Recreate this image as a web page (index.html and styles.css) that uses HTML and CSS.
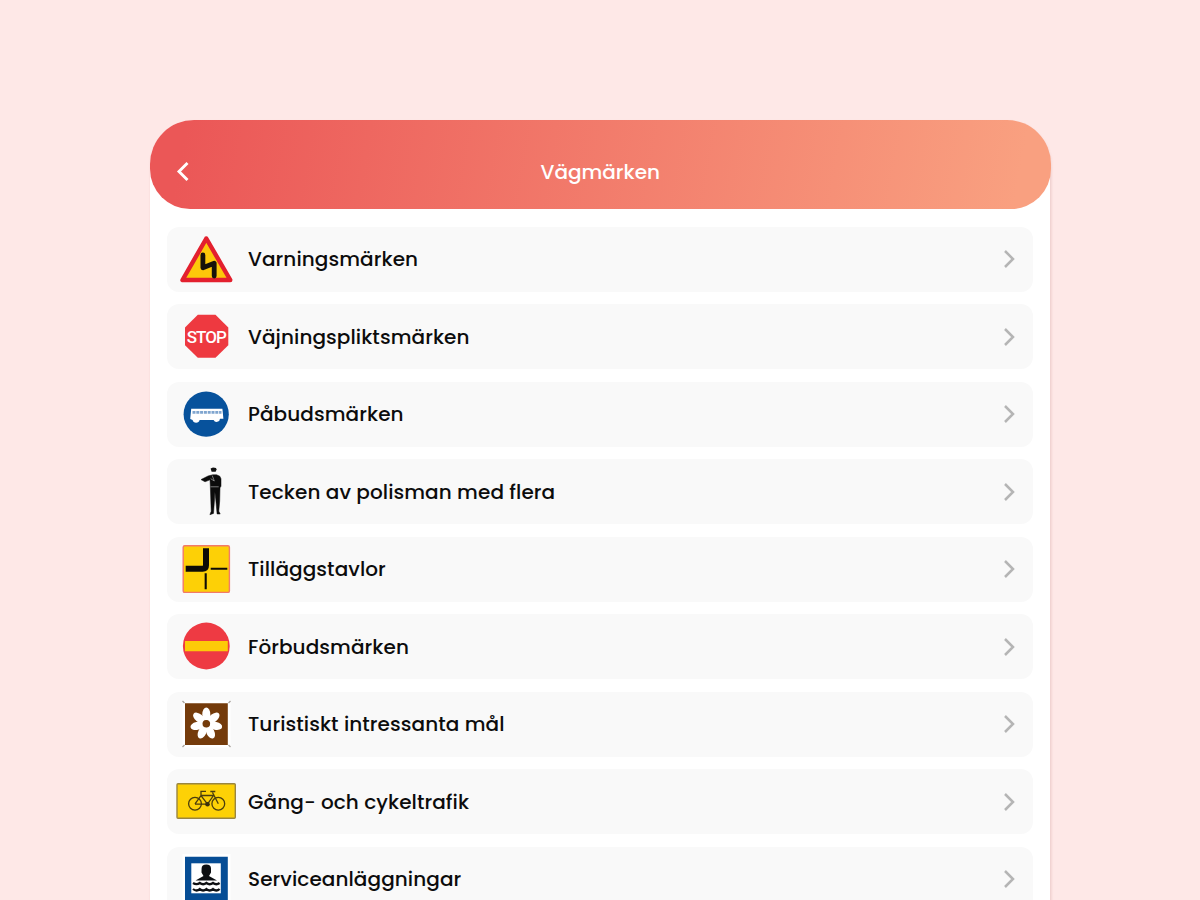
FILE: index.html
```html
<!DOCTYPE html>
<html lang="sv">
<head>
    <meta charset="UTF-8">
    <title>Vägmärken</title>
    <link rel="stylesheet" href="styles.css">
</head>
<body>
    <div class="panel">
        <header class="header">
            <svg class="back" viewBox="0 0 14 22"><path d="M11.5 2 3 10.5l8.5 8.5"/></svg>
            <h1>Vägmärken</h1>
        </header>

        <ul class="list">
            <li class="row">
                <svg class="sign" viewBox="0 0 60 65">
                    <path d="M30.3 11.5 6.5 53h47.8z" fill="#fdc80a" stroke="#e3202e" stroke-width="4.4" stroke-linejoin="round"/>
                    <path d="M26.9 28V40.8L38.2 36.2V49" fill="none" stroke="#17120a" stroke-width="4.8" stroke-linejoin="round" stroke-linecap="round"/>
                </svg>
                <span class="label">Varningsmärken</span>
                <svg class="chevron" viewBox="0 0 14 20"><path d="m3 2 8 8-8 8"/></svg>
            </li>
            <li class="row">
                <svg class="sign" viewBox="0 0 60 65">
                    <path d="M21.8 10.8h17.7l12.8 12.8v17.6L39.5 53.8H21.8L9 41.2V23.6z" fill="#ee3940"/>
                    <text class="stop" x="10.8" y="38.6" textLength="40" lengthAdjust="spacing">STOP</text>
                </svg>
                <span class="label">Väjningspliktsmärken</span>
                <svg class="chevron" viewBox="0 0 14 20"><path d="m3 2 8 8-8 8"/></svg>
            </li>
            <li class="row">
                <svg class="sign" viewBox="0 0 60 65">
                    <circle cx="30.2" cy="32.2" r="22.6" fill="#07529c"/>
                    <path d="M15.2 26.7h31.2l1 10h-3.4a3.4 3.4 0 0 1-6.4 1.4H23.6a3.6 3.6 0 0 1-7 0l-2.4-1.2z" fill="#fff"/>
                    <path d="M16.5 30.4h29" stroke="#7fa5cf" stroke-width="2.8" stroke-dasharray="3 .8"/>
                </svg>
                <span class="label">Påbudsmärken</span>
                <svg class="chevron" viewBox="0 0 14 20"><path d="m3 2 8 8-8 8"/></svg>
            </li>
            <li class="row">
                <svg class="sign" viewBox="0 0 60 65">
                    <path d="M34.6 9.6 37 8.4l3 .5.6 1.7-1 2.2h-4z" fill="#111"/>
                    <path d="M25 20.6 32 17l4.6-1.2h4l3.2 1.4 1.2 2.6v7.4l-1 1.6-.3 13-.9 10.4 1.4 2.8h-3.1l-1.3-14-.9-8-.4 8-1 13.4-3.6 1.3 1.3-3.4-.9-25.5-.3-6-5 2z" fill="#0b0b0b" stroke="#0b0b0b" stroke-width=".5"/>
                    <path d="M36.2 16.5 38.3 22l-3.6-2.3M34.5 27.8h8.2" fill="none" stroke="#aaa" stroke-width=".7"/>
                </svg>
                <span class="label">Tecken av polisman med flera</span>
                <svg class="chevron" viewBox="0 0 14 20"><path d="m3 2 8 8-8 8"/></svg>
            </li>
            <li class="row">
                <svg class="sign" viewBox="0 0 60 65">
                    <rect x="7.2" y="8.8" width="46.2" height="46.6" rx="1.5" fill="#fdd006" stroke="#f27a68" stroke-width="1.4"/>
                    <path d="M30 11.3v17q0 3.4-3.4 3.4H9.7" fill="none" stroke="#0d0b06" stroke-width="6"/>
                    <path d="M34.7 31.8h16.6M29.7 36.3v16" stroke="#0d0b06" stroke-width="2.1"/>
                </svg>
                <span class="label">Tilläggstavlor</span>
                <svg class="chevron" viewBox="0 0 14 20"><path d="m3 2 8 8-8 8"/></svg>
            </li>
            <li class="row">
                <svg class="sign" viewBox="0 0 60 65">
                    <circle cx="30.3" cy="32" r="23.4" fill="#ee3a43"/>
                    <path d="M9 27h42.8v10.2H9z" fill="#fdcb08"/>
                </svg>
                <span class="label">Förbudsmärken</span>
                <svg class="chevron" viewBox="0 0 14 20"><path d="m3 2 8 8-8 8"/></svg>
            </li>
            <li class="row">
                <svg class="sign" viewBox="0 0 60 65">
                    <path d="M6.5 8.5h48v47h-48z" fill="#fff"/>
                    <path d="M9 11.2h42.8V53H9z" fill="#743b0b"/>
                    <path d="m6.5 9 2 2m46-2-2 2m-46 44 2-2m46 2-2-2" stroke="#aaa59f" stroke-width="1.4"/>
                    <g fill="#fff">
                        <ellipse cx="30.3" cy="22.3" rx="4" ry="6.8"/>
                        <ellipse cx="30.3" cy="22.3" rx="4" ry="6.8" transform="rotate(51.4 30.3 31.7)"/>
                        <ellipse cx="30.3" cy="22.3" rx="4" ry="6.8" transform="rotate(102.8 30.3 31.7)"/>
                        <ellipse cx="30.3" cy="22.3" rx="4" ry="6.8" transform="rotate(154.2 30.3 31.7)"/>
                        <ellipse cx="30.3" cy="22.3" rx="4" ry="6.8" transform="rotate(205.6 30.3 31.7)"/>
                        <ellipse cx="30.3" cy="22.3" rx="4" ry="6.8" transform="rotate(257 30.3 31.7)"/>
                        <ellipse cx="30.3" cy="22.3" rx="4" ry="6.8" transform="rotate(308.4 30.3 31.7)"/>
                    </g>
                    <circle cx="30.3" cy="31.7" r="3.8" fill="#743b0b"/>
                </svg>
                <span class="label">Turistiskt intressanta mål</span>
                <svg class="chevron" viewBox="0 0 14 20"><path d="m3 2 8 8-8 8"/></svg>
            </li>
            <li class="row">
                <svg class="sign" viewBox="0 0 60 65">
                    <rect x="1" y="14.8" width="58.3" height="34.4" rx="1" fill="#fdd106" stroke="#9a8640" stroke-width="1.4"/>
                    <g fill="none" stroke="#4a3d0e" stroke-width="1.3">
                        <circle cx="19" cy="34.8" r="6.4"/>
                        <circle cx="42.3" cy="34.8" r="6.4"/>
                        <path d="M19 34.8 25 26.5l6.5 8.7 6-8.7H25M31.5 35.2H19M42.3 34.8 36.5 23.5M25 26.5v-4.2h5M34.3 22.5h5"/>
                    </g>
                    <circle cx="31.5" cy="35.2" r="2.3" fill="#3b310c"/>
                </svg>
                <span class="label">Gång- och cykeltrafik</span>
                <svg class="chevron" viewBox="0 0 14 20"><path d="m3 2 8 8-8 8"/></svg>
            </li>
            <li class="row">
                <svg class="sign" viewBox="0 0 60 65">
                    <path d="M6.5 7h48v58h-48z" fill="#fff"/>
                    <path d="M9 9.7h42.8V60H9z" fill="#064d95"/>
                    <path d="M15.3 16.3h29.5v30H15.3z" fill="#fff"/>
                    <path d="M25.6 21.5q0-4 4.7-4t4.7 4v4l-2 3.5 8 4.5H19.5l8-4.5-2-3.5z" fill="#0d0f12"/>
                    <path d="M17 36q3.5 2.4 6.8 0 3.3 2.4 6.6 0 3.3 2.4 6.6 0 3.3 2.4 6.6 0M17 42q3.5 3 6.8 0 3.3 3 6.6 0 3.3 3 6.6 0 3.3 3 6.6 0" fill="none" stroke="#0d0f12" stroke-width="2.3"/>
                </svg>
                <span class="label">Serviceanläggningar</span>
                <svg class="chevron" viewBox="0 0 14 20"><path d="m3 2 8 8-8 8"/></svg>
            </li>
        </ul>
    </div>
</body>
</html>
```
FILE: styles.css
```css
* {
    box-sizing: border-box;
}
body {
    margin: 0;
    height: 900px;
    padding: 120px 150px 0;
    overflow: hidden;
    background: #fee8e7;
    font-family: Poppins, Inter, sans-serif;
}
.panel {
    height: 800px;
    background: #fff;
    border-radius: 44px 44px 0 0;
    box-shadow: 1px 2px 3px rgba(160, 70, 70, 0.2);
}

/* header bar */
.header {
    display: grid;
    grid-template-columns: 14px 1fr 14px;
    align-items: center;
    width: 901px;
    height: 89px;
    padding: 14px 26px 0 25.5px;
    border-radius: 44px 44px 40px 40px;
    background: linear-gradient(100deg, #eb5757 4%, #f9a080 96%);
    color: #fff;
}
.header h1 {
    margin: 0;
    text-align: center;
    font-size: 20px;
    font-weight: 500;
}
.back {
    width: 14px;
    height: 22px;
    fill: none;
    stroke: #fff;
    stroke-width: 2.9;
}

/* sign categories */
.list {
    display: flex;
    flex-direction: column;
    gap: 12.5px;
    margin: 0;
    padding: 17.5px 17px 0;
    list-style: none;
}
.row {
    display: flex;
    flex: none;
    align-items: center;
    gap: 12px;
    height: 65px;
    padding: 0 17.5px 0 9px;
    border-radius: 12px;
    background: #f9f9f9;
}
.sign {
    flex: none;
    width: 60px;
    height: 65px;
}
.stop {
    font: 500 17px Roboto, sans-serif;
    fill: #fff;
}
.label {
    flex: 1;
    color: #0c0c0c;
    font-size: 20px;
    font-weight: 500;
    letter-spacing: 0.08px;
    white-space: nowrap;
}
.chevron {
    width: 14px;
    height: 20px;
    fill: none;
    stroke: #b5b5b5;
    stroke-width: 2.5;
}
```
